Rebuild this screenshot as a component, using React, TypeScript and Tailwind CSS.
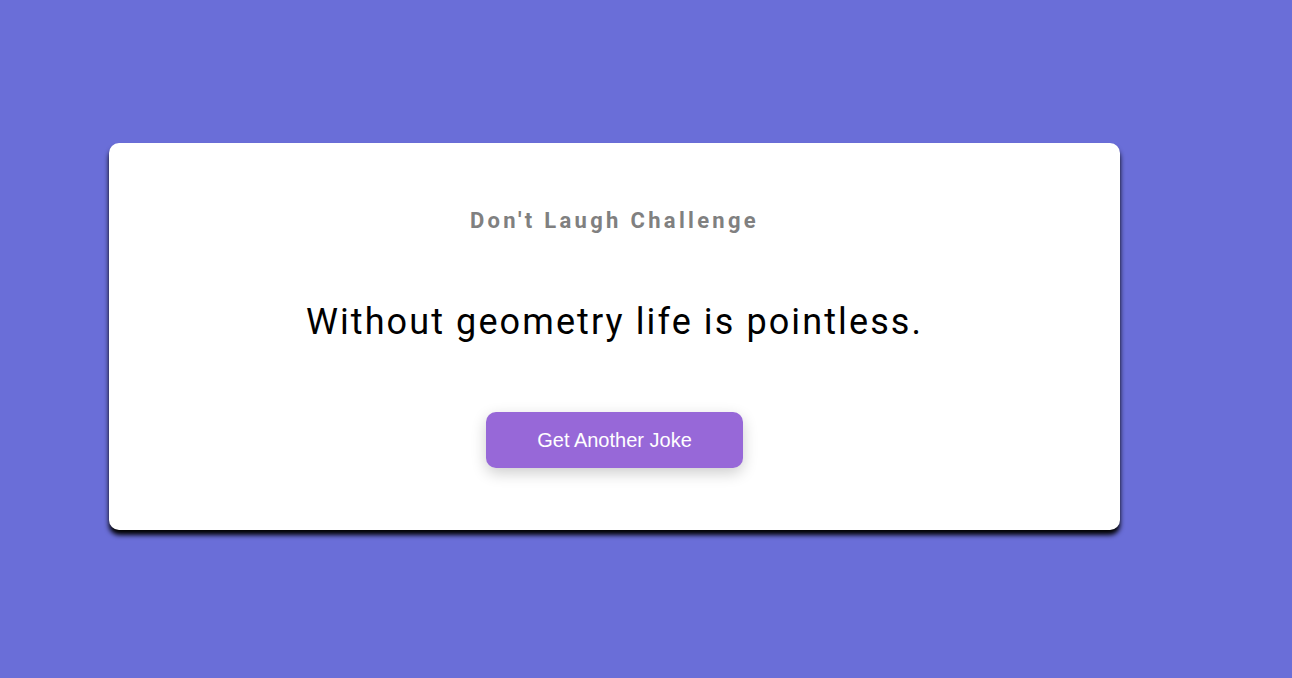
export default function App() {
  return (
    <div className="min-h-[678px] w-full bg-[#6a6ed8] pt-[143px]">
      <div className="ml-[109px] flex h-[387px] w-[1011px] flex-col items-center rounded-[10px] bg-white shadow-[0_5px_5px_rgba(0,0,0,1)]">
        <h3 className="mt-[64px] font-['Roboto',sans-serif] text-[22px] font-bold leading-[28px] tracking-[3.3px] text-[#808080]">
          Don't Laugh Challenge
        </h3>
        <p className="mt-[66px] font-['Roboto',sans-serif] text-[36px] leading-[43px] tracking-[2.1px] text-black">
          Without geometry life is pointless.
        </p>
        <button className="mt-[68px] h-[56px] w-[257px] rounded-[10px] bg-[#9768d8] font-['Liberation_Sans',Arial,sans-serif] text-[20px] text-white shadow-[0_5px_15px_rgba(0,0,0,0.2)]">
          Get Another Joke
        </button>
      </div>
    </div>
  );
}
